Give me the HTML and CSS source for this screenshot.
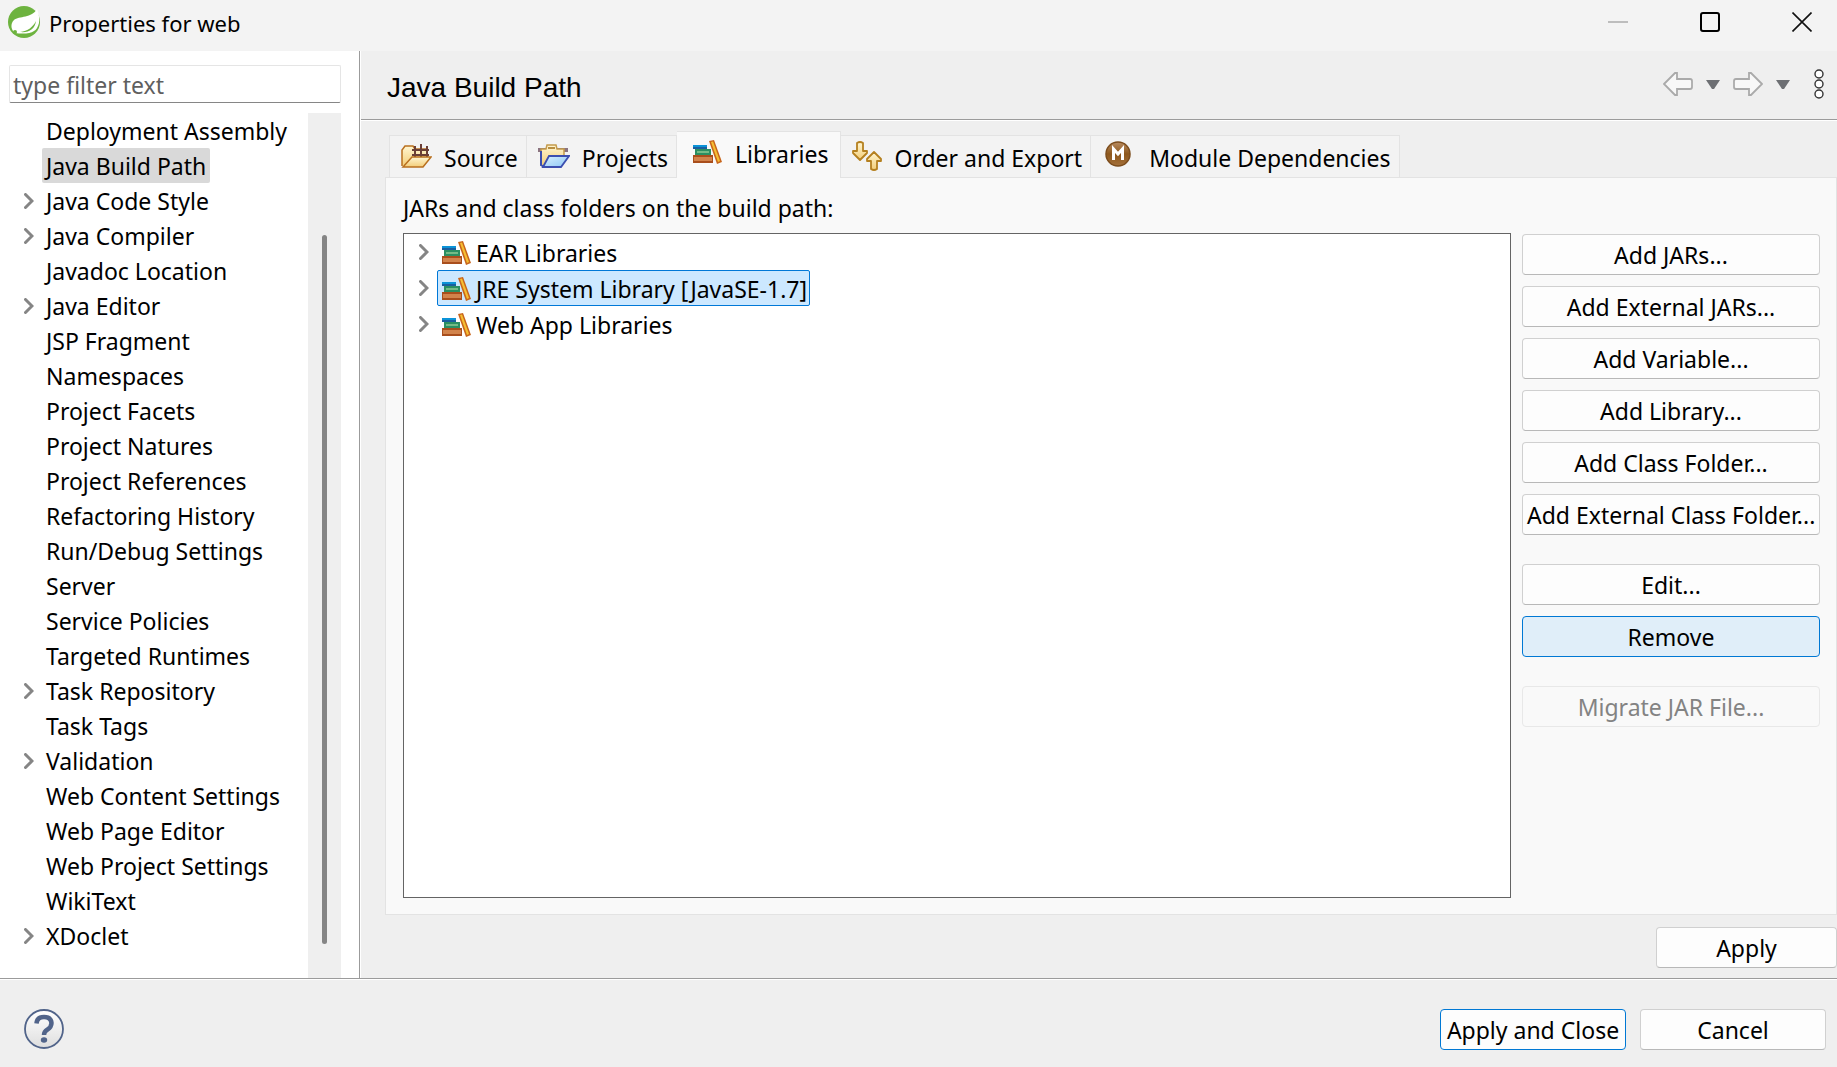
FILE: index.html
```
<!DOCTYPE html>
<html lang="en">
<head>
  <meta charset="UTF-8">
  <title>Properties for web</title>
  <link rel="stylesheet" href="styles.css">
</head>
<body>
  <!-- shared icons -->
  <svg class="defs" width="0" height="0">
    <defs>
      <linearGradient id="cream" x1="0" y1="0" x2="0" y2="1">
        <stop offset="0" stop-color="#fff6d2"/><stop offset="1" stop-color="#f3cd78"/>
      </linearGradient>
      <linearGradient id="sky" x1="0" y1="0" x2="1" y2="1">
        <stop offset="0" stop-color="#d9f1ff"/><stop offset="1" stop-color="#8cc6f5"/>
      </linearGradient>
      <linearGradient id="brown" x1="0" y1="0" x2="0" y2="1">
        <stop offset="0" stop-color="#b98c62"/><stop offset=".5" stop-color="#8d571b"/><stop offset="1" stop-color="#a4703a"/>
      </linearGradient>
      <linearGradient id="silver" x1="0" y1="0" x2="0" y2="1">
        <stop offset="0" stop-color="#ffffff"/><stop offset="1" stop-color="#dedede"/>
      </linearGradient>
    </defs>
    <symbol id="chevron" viewBox="0 0 10 16">
      <path d="M1.500 1.500 8 8l-6.500 6.500" fill="none" stroke="#858585" stroke-width="3" stroke-linecap="round"/>
    </symbol>
    <symbol id="books" viewBox="0 0 30 24">
      <path d="M0 5h14v4H0z" fill="#1b5f9e"/>
      <path d="M0 5h14v2H0z" fill="#0b93d8"/>
      <path d="M2 9h16v6H2z" fill="#2b8f62"/>
      <path d="M4 11h12v2H4z" fill="#74bb87"/>
      <path d="M0 15h20v8H0z" fill="#a94e1c"/>
      <path d="M1 17h18v4H1z" fill="#d2834b"/>
      <path d="m16 1 5-1 8 22-5 2z" fill="#c8651c"/>
      <path d="m18 2 2-.5 7 19.500-2 1z" fill="#f5bf33"/>
    </symbol>
  </svg>

  <header class="titlebar">
    <svg class="logo" viewBox="0 0 32 32">
      <circle cx="16" cy="16" r="16" fill="#6db33f"/>
      <path d="M29 3c1 3 3 8 2 14-1 4-3 7-5 8-4 3-12 3-19 2-4-3-5-9-1-13 5-4 18-2 23-11z" fill="#fff"/>
      <path d="M12 26c8-1 13-5 16-11-1 8-7 12-16 11z" fill="#6db33f"/>
      <circle cx="7" cy="26" r="2" fill="#6db33f"/>
    </svg>
    <h1>Properties for web</h1>
    <div class="window-buttons">
      <button aria-label="Minimize" disabled><svg viewBox="0 0 20 20"><path d="M0 10h20" stroke="#bdbdbd" stroke-width="2"/></svg></button>
      <button aria-label="Maximize"><svg viewBox="0 0 20 20"><rect x="1" y="1" width="18" height="18" rx="2" fill="none" stroke="#000" stroke-width="2"/></svg></button>
      <button aria-label="Close"><svg viewBox="0 0 20 20"><path d="m.5.5 19 19m0-19-19 19" stroke="#111" stroke-width="1.600"/></svg></button>
    </div>
  </header>

  <div class="content">
    <aside class="sidebar">
      <input class="filter" type="text" placeholder="type filter text" aria-label="Filter">
      <div class="tree-wrap">
        <ul class="tree">
          <li><span>Deployment Assembly</span></li>
          <li class="current"><span>Java Build Path</span></li>
          <li><svg class="chevron"><use href="#chevron"/></svg><span>Java Code Style</span></li>
          <li><svg class="chevron"><use href="#chevron"/></svg><span>Java Compiler</span></li>
          <li><span>Javadoc Location</span></li>
          <li><svg class="chevron"><use href="#chevron"/></svg><span>Java Editor</span></li>
          <li><span>JSP Fragment</span></li>
          <li><span>Namespaces</span></li>
          <li><span>Project Facets</span></li>
          <li><span>Project Natures</span></li>
          <li><span>Project References</span></li>
          <li><span>Refactoring History</span></li>
          <li><span>Run/Debug Settings</span></li>
          <li><span>Server</span></li>
          <li><span>Service Policies</span></li>
          <li><span>Targeted Runtimes</span></li>
          <li><svg class="chevron"><use href="#chevron"/></svg><span>Task Repository</span></li>
          <li><span>Task Tags</span></li>
          <li><svg class="chevron"><use href="#chevron"/></svg><span>Validation</span></li>
          <li><span>Web Content Settings</span></li>
          <li><span>Web Page Editor</span></li>
          <li><span>Web Project Settings</span></li>
          <li><span>WikiText</span></li>
          <li><svg class="chevron"><use href="#chevron"/></svg><span>XDoclet</span></li>
        </ul>
        <div class="scrollbar"><div class="thumb"></div></div>
      </div>
    </aside>

    <main class="page">
      <div class="page-header">
        <h2>Java Build Path</h2>
        <div class="history">
          <button aria-label="Back" disabled><svg width="30" height="24" viewBox="0 0 30 24"><path d="M1 12 12 1h2v6h13q2 0 2 2v6q0 2-2 2H14v6h-2z" fill="#f8f8f8" stroke="#aaa" stroke-width="1.800"/></svg></button>
          <button aria-label="Back history"><svg width="14" height="9" viewBox="0 0 14 9"><path d="M0 0h14L8 9H6z" fill="#6d6f73"/></svg></button>
          <button aria-label="Forward" disabled><svg width="30" height="24" viewBox="0 0 30 24"><path d="M29 12 18 1h-2v6H3Q1 7 1 9v6q0 2 2 2h13v6h2z" fill="#f8f8f8" stroke="#aaa" stroke-width="1.800"/></svg></button>
          <button aria-label="Forward history"><svg width="14" height="9" viewBox="0 0 14 9"><path d="M0 0h14L8 9H6z" fill="#6d6f73"/></svg></button>
          <button class="menu" aria-label="Menu"><svg width="10" height="30" viewBox="0 0 10 30"><g fill="#fff" stroke="#333" stroke-width="1.400"><circle cx="5" cy="5" r="4"/><circle cx="5" cy="15" r="4"/><circle cx="5" cy="25" r="4"/></g></svg></button>
        </div>
      </div>

      <div class="tabs" role="tablist">
        <button class="tab" role="tab">
          <svg width="31" height="24" viewBox="0 0 31 24">
            <path d="M1 22V6l3-4h8l2 3h12v7" fill="url(#cream)" stroke="#b9701f" stroke-width="1.500"/>
            <path d="M11 6h17M11 11h17M14 2v11M20 0v13M26 2v11" fill="none" stroke="#6b3f36" stroke-width="2"/>
            <path d="M2 23 11 13h19l-8 10z" fill="url(#cream)" stroke="#b9701f" stroke-width="1.500"/>
          </svg>
          Source
        </button>
        <button class="tab" role="tab">
          <svg width="32" height="24" viewBox="0 0 32 24">
            <path d="M0 4h30v4H0z" fill="#8b7480"/>
            <path d="M3 22V5h5l1-4h9l1 4h7v8" fill="url(#cream)" stroke="#c49a4b" stroke-width="1.500"/>
            <path d="M10 4h7" stroke="#b88e40" stroke-width="2"/>
            <path d="M3 7v14l3 2" fill="none" stroke="#3c4fb0" stroke-width="2"/>
            <path d="M5 23 11 12h20l-8 11z" fill="url(#sky)" stroke="#3c4fb0" stroke-width="1.800"/>
          </svg>
          Projects
        </button>
        <button class="tab active" role="tab" aria-selected="true">
          <svg width="30" height="24"><use href="#books"/></svg>
          Libraries
        </button>
        <button class="tab" role="tab">
          <svg width="30" height="30" viewBox="0 0 30 30">
            <g fill="url(#cream)" stroke="#b5801f" stroke-width="1.800" stroke-linejoin="round">
              <path d="M5 2q3-2 6 0v8h4v2l-7 7-7-7v-2h4z"/>
              <path d="M19 28q3 2 6 0v-8h4v-2l-7-7-7 7v2h4z"/>
            </g>
          </svg>
          Order and Export
        </button>
        <button class="tab module" role="tab">
          <svg width="26" height="26" viewBox="0 0 26 26">
            <circle cx="13" cy="13" r="12" fill="url(#brown)" stroke="#7c4d1d" stroke-width="1.500"/>
            <path d="M8.500 19V8l4.500 5 4.500-5v11" fill="none" stroke="#fff" stroke-width="3"/>
          </svg>
          Module Dependencies
        </button>
      </div>

      <section class="panel">
        <p class="caption">JARs and class folders on the build path:</p>
        <div class="columns">
          <ul class="libraries">
            <li><svg class="chevron"><use href="#chevron"/></svg><span class="lib"><svg width="30" height="24"><use href="#books"/></svg>EAR Libraries</span></li>
            <li><svg class="chevron"><use href="#chevron"/></svg><span class="lib selected"><svg width="30" height="24"><use href="#books"/></svg>JRE System Library [JavaSE-1.7]</span></li>
            <li><svg class="chevron"><use href="#chevron"/></svg><span class="lib"><svg width="30" height="24"><use href="#books"/></svg>Web App Libraries</span></li>
          </ul>
          <div class="actions">
            <button class="btn">Add JARs...</button>
            <button class="btn">Add External JARs...</button>
            <button class="btn">Add Variable...</button>
            <button class="btn">Add Library...</button>
            <button class="btn">Add Class Folder...</button>
            <button class="btn">Add External Class Folder...</button>
            <button class="btn group">Edit...</button>
            <button class="btn hot">Remove</button>
            <button class="btn group" disabled>Migrate JAR File...</button>
          </div>
        </div>
      </section>

      <div class="apply-row">
        <button class="btn">Apply</button>
      </div>
    </main>
  </div>

  <footer class="footer">
    <button class="help" aria-label="Help">
      <svg width="40" height="40" viewBox="0 0 40 40">
        <circle cx="20" cy="20" r="19" fill="url(#silver)" stroke="#51648a" stroke-width="1.800"/>
        <path d="M12.500 14.500q.5-6.500 7.500-6.500t7.500 6q0 4-4 6.500-3.500 2-3.500 5.500" fill="none" stroke="#51648a" stroke-width="4.500"/>
        <ellipse cx="20" cy="31" rx="3.200" ry="2.800" fill="#51648a"/>
      </svg>
    </button>
    <button class="btn default">Apply and Close</button>
    <button class="btn">Cancel</button>
  </footer>
</body>
</html>
```
FILE: styles.css
```
* {
  box-sizing: border-box;
  margin: 0;
  padding: 0;
}

body {
  display: flex;
  flex-direction: column;
  height: 100vh;
  overflow: hidden;
  background: #efefef;
  color: #000;
  font-family: "Noto Sans", "Open Sans", sans-serif;
  font-size: 23px;
  line-height: 34px;
}

ul {
  list-style: none;
}

button,
input {
  font: inherit;
  color: inherit;
  border: none;
  background: none;
}

svg {
  display: block;
  flex: none;
}

.defs {
  position: absolute;
}

.chevron {
  width: 10px;
  height: 16px;
}

/* title bar */
.titlebar {
  display: flex;
  align-items: center;
  height: 51px;
  padding: 0 20px 7px 8px;
  background: #f3f3f3;
}

.logo {
  width: 32px;
  height: 32px;
}

.titlebar h1 {
  margin-left: 9px;
  padding-top: 2px;
  font-size: 22px;
  font-weight: normal;
}

.window-buttons {
  display: flex;
  gap: 62px;
  margin-left: auto;
}

.window-buttons button {
  padding: 5px;
}

.window-buttons svg {
  width: 20px;
  height: 20px;
}

/* left side */
.content {
  display: flex;
  flex: 1;
  min-height: 0;
  border-bottom: 1px solid #9b9b9b;
}

.sidebar {
  display: flex;
  flex-direction: column;
  width: 360px;
  padding: 14px 18px 0 9px;
  background: #fff;
  border-right: 1px solid #9b9b9b;
}

.filter {
  width: 100%;
  height: 38px;
  padding: 2px 3px 0;
  border: 1px solid #e5e5e5;
  border-bottom-color: #868686;
  border-radius: 2px;
  background: #fff;
}

.filter::placeholder {
  color: #5f5f5f;
}

.tree-wrap {
  display: flex;
  flex: 1;
  min-height: 0;
  margin-top: 10px;
}

.tree {
  flex: 1;
}

.tree li {
  display: flex;
  align-items: center;
  height: 35px;
  padding-left: 33px;
}

.tree .chevron {
  margin: 0 8px 0 -18px;
}

.tree span {
  padding: 1px 4px 0;
  border-radius: 2px;
  white-space: nowrap;
}

.current span {
  background: #d9d9d9;
}

.scrollbar {
  width: 33px;
  padding: 122px 14px 34px;
  background: #efefef;
}

.thumb {
  height: 100%;
  border-radius: 3px;
  background: #858585;
}

/* right side */
.page {
  display: flex;
  flex: 1;
  flex-direction: column;
  min-width: 0;
  border-left: 1px solid #fff;
}

.page-header {
  display: flex;
  align-items: center;
  height: 69px;
  padding: 0 13px 2px 26px;
  border-bottom: 1px solid #9b9b9b;
  box-shadow: 0 1px #fff;
}

.page-header h2 {
  padding-top: 8px;
  font-family: "Liberation Sans", sans-serif;
  font-size: 28px;
  font-weight: normal;
}

.history {
  display: flex;
  align-items: center;
  gap: 13px;
  margin-left: auto;
}

.history .menu {
  margin-left: 11px;
}

.tabs {
  display: flex;
  align-items: flex-end;
  height: 57px;
  padding-left: 28px;
}

.tab {
  display: flex;
  align-items: center;
  gap: 12px;
  height: 42px;
  padding: 2px 8px 0 11px;
  border: 1px solid #e3e3e3;
  border-width: 1px 1px 0 0;
  background: #f3f3f3;
  white-space: nowrap;
}

.tab:first-child {
  border-left-width: 1px;
}

.tab svg {
  margin-bottom: 4px;
}

.tab.active {
  z-index: 1;
  height: 47px;
  margin-bottom: -1px;
  padding: 0 12px 2px 16px;
  background: #f9f9f9;
}

.tab.module {
  padding-left: 14px;
}

.tab.module svg {
  margin-right: 6px;
  margin-bottom: 8px;
}

.panel {
  display: flex;
  flex: 1;
  flex-direction: column;
  margin-left: 24px;
  padding: 13px 16px 16px 17px;
  background: #f9f9f9;
  border: 1px solid #e3e3e3;
}

.caption {
  margin-bottom: 8px;
}

.columns {
  display: flex;
  flex: 1;
  gap: 11px;
}

.libraries {
  flex: 1;
  background: #fff;
  border: 1px solid #646464;
}

.libraries li {
  display: flex;
  align-items: center;
  height: 36px;
  padding-left: 15px;
}

.lib {
  display: flex;
  align-items: center;
  gap: 4px;
  height: 36px;
  margin-left: 8px;
  padding: 1px 2px 0 4px;
  border: 1px solid transparent;
  border-radius: 2px;
}

.lib.selected {
  background: #cce8ff;
  border-color: #0078d7;
}

/* buttons */
.btn {
  height: 41px;
  padding: 1px 4px 0;
  border: 1px solid #d0d0d0;
  border-bottom-color: #b8b8b8;
  border-radius: 4px;
  background: #fdfdfd;
  white-space: nowrap;
}

.btn.default {
  border-color: #0078d4;
}

.btn.hot {
  border-color: #0078d4;
  background: #e0eef9;
}

.btn:disabled {
  border-color: #e8e8e8;
  background: #f9f9f9;
  color: #838383;
}

.actions {
  display: flex;
  flex-direction: column;
  gap: 11px;
  width: 298px;
  padding-top: 1px;
}

.actions .group {
  margin-top: 18px;
}

.apply-row {
  display: flex;
  justify-content: flex-end;
  padding: 12px 0 10px;
}

.apply-row .btn {
  width: 181px;
}

/* bottom bar */
.footer {
  display: flex;
  align-items: center;
  gap: 14px;
  height: 88px;
  padding: 11px 11px 0 24px;
  border-top: 1px solid #fff;
}

.help {
  margin-right: auto;
}

.footer .btn {
  width: 186px;
}
```
